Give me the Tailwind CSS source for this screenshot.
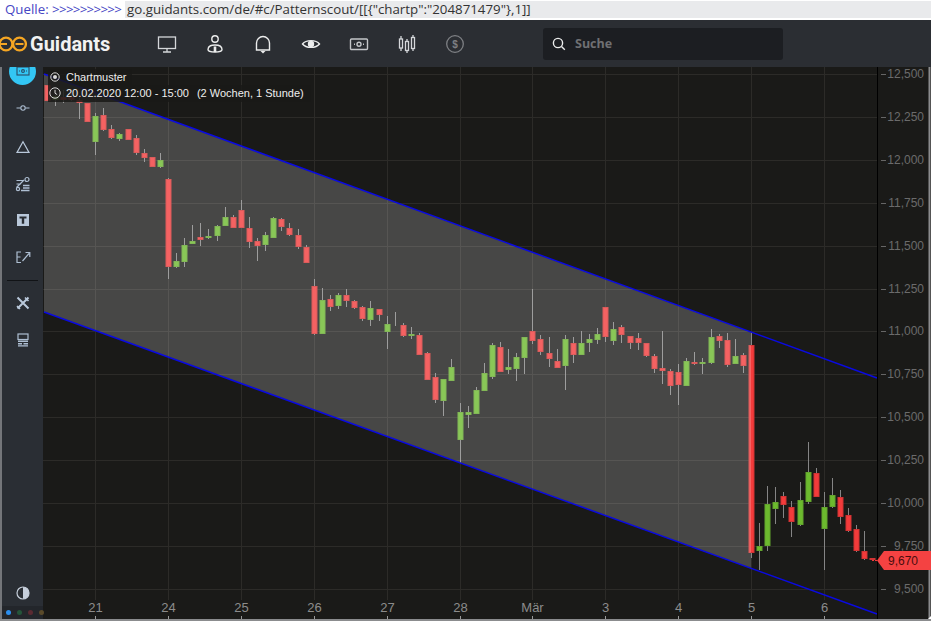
<!DOCTYPE html>
<html lang="en">
<head>
    <meta charset="UTF-8">
    <title>Guidants</title>
    <script src="https://cdn.jsdelivr.net/npm/@tailwindcss/browser@4"></script>
</head>
<body class="w-[931px] h-[621px] overflow-hidden bg-white flex flex-col font-['Liberation_Sans',sans-serif]">

    <!-- Source line -->
    <div class="h-[20px] flex items-start pt-px text-[13.3px] leading-[17px] font-['Open_Sans',sans-serif]">
        <span class="w-[125px] shrink-0 pl-[5px] text-[#4646c4] whitespace-nowrap">Quelle: <span class="tracking-[-0.7px]">&gt;&gt;&gt;&gt;&gt;&gt;&gt;&gt;&gt;&gt;</span></span>
        <span class="flex-1 h-[17px] pl-[2px] bg-[#e9eaec] text-[#333] whitespace-nowrap">go.guidants.com/de/#c/Patternscout/[[{"chartp":"204871479"},1]]</span>
    </div>

    <!-- Top navigation -->
    <div class="h-[47px] shrink-0 pt-px bg-[#2b2e33] flex items-center relative">
        <div class="w-[157px] shrink-0 flex items-center">
            <svg class="w-[27px] h-[20px] shrink-0" viewBox="0 0 27 20" fill="none" stroke="#f5a623" stroke-width="2.3">
                <circle cx="6" cy="10" r="6.4"/>
                <circle cx="19.5" cy="10" r="6.4"/>
                <path d="M0 10H7M15.5 10H23.5" stroke-width="2"/>
            </svg>
            <span class="ml-[3px] text-[20px] leading-none font-bold text-[#f2f2f2] font-['Roboto',sans-serif]">Guidants</span>
        </div>
        <div class="flex items-center gap-[28px]">
            <svg class="w-[20px] h-[20px]" viewBox="0 0 20 20" fill="none" stroke="#d5d7da" stroke-width="1.3"><rect x="1.5" y="3" width="17" height="11.5"/><path d="M10 14.5V18M6 18H14"/></svg>
            <svg class="w-[20px] h-[20px]" viewBox="0 0 20 20" fill="none" stroke="#eceded" stroke-width="1.4"><circle cx="10" cy="5" r="3.2"/><path d="M3 15.5C3 11.5 7 11 10 11S17 11.5 17 15.5C17 17.5 14 18 10 18S3 17.5 3 15.5Z"/><path d="M10 12.5V18" stroke-width="2.6"/></svg>
            <svg class="w-[20px] h-[20px]" viewBox="0 0 20 20" fill="none" stroke="#eceded" stroke-width="1.4"><path d="M3.5 16V9A6.5 6.5 0 0 1 16.5 9V16Z"/><path d="M7.5 17H12.5L10 19.5Z" fill="#eceded" stroke="none"/></svg>
            <svg class="w-[20px] h-[20px]" viewBox="0 0 20 20" fill="none" stroke="#eceded" stroke-width="1.4"><path d="M1.5 10C5 5.5 15 5.5 18.5 10C15 14.5 5 14.5 1.5 10Z"/><circle cx="10" cy="10" r="3.2" fill="#eceded" stroke="none"/></svg>
            <svg class="w-[20px] h-[20px]" viewBox="0 0 20 20" fill="none" stroke="#c4c6c9" stroke-width="1.4"><rect x="1.5" y="5" width="17" height="10.5" rx="1"/><circle cx="10" cy="10.2" r="2"/><path d="M5 10.2H6M14 10.2H15"/></svg>
            <svg class="w-[20px] h-[20px]" viewBox="0 0 20 20" fill="none" stroke="#d5d7da" stroke-width="1.3"><rect x="2.5" y="5" width="3" height="9"/><path d="M4 2V5M4 14V17"/><rect x="8.5" y="7.5" width="3" height="9"/><path d="M10 5V7.5M10 16.5V19"/><rect x="14.5" y="3.5" width="3" height="11"/><path d="M16 1V3.5M16 14.5V17"/></svg>
            <svg class="w-[20px] h-[20px]" viewBox="0 0 20 20" fill="none" stroke="#7e8084" stroke-width="1.3"><circle cx="10" cy="10" r="8.3"/><text x="10" y="13.5" text-anchor="middle" font-size="10" font-weight="700" fill="#7e8084" stroke="none" font-family="Liberation Sans">$</text></svg>
        </div>
        <div class="ml-[78px] w-[240px] h-[32px] rounded-[3px] bg-[#1c1e22] flex items-center pl-[9px]">
            <svg class="w-[14px] h-[14px]" viewBox="0 0 14 14" fill="none" stroke="#eceded" stroke-width="1.4"><circle cx="6" cy="6" r="4.6"/><path d="M9.5 9.5L12.8 12.8"/></svg>
            <span class="ml-[9px] text-[12.5px] font-bold text-[#6f7073] font-['Open_Sans',sans-serif]">Suche</span>
        </div>
    </div>

    <div class="flex-1 flex min-h-0 relative bg-[#1a1a18] border-b-2 border-[#8b8c8e]">
        <!-- Left toolbar -->
        <div class="w-[43px] shrink-0 bg-[#2a2e34] border-l-2 border-[#74767a] flex flex-col items-center relative overflow-hidden">
            <div class="absolute left-[7px] top-[-9.5px] w-[27px] h-[27px] rounded-full bg-[#33c6f4] flex items-center justify-center">
                <svg class="w-[14px] h-[10px]" viewBox="0 0 14 10" fill="none" stroke="#2a4c66" stroke-width="1.1"><rect x="1" y="1" width="12" height="8"/><circle cx="7" cy="5" r="1.4"/><path d="M3 5H4M10 5H11"/></svg>
            </div>
            <svg class="w-[16px] h-[16px] mt-[33px] shrink-0" viewBox="0 0 16 16" fill="none" stroke="#aebfd3" stroke-width="1.1"><path d="M1.5 8H5.5M10.5 8H14.5"/><circle cx="8" cy="8" r="2.2"/></svg>
            <svg class="w-[16px] h-[16px] mt-[23px] shrink-0" viewBox="0 0 16 16" fill="none" stroke="#b9c8da" stroke-width="1.2"><path d="M8 2.8L14 13.4H2Z"/></svg>
            <svg class="w-[16px] h-[16px] mt-[21px] shrink-0" viewBox="0 0 16 16" fill="none" stroke="#aebfd3" stroke-width="1.2"><path d="M1.5 4.5H9M1.5 8H6M1.5 11.5L9 4"/><circle cx="12" cy="3.5" r="2"/><circle cx="3" cy="13" r="1.6"/><path d="M8 9.5H14.5M8 12H14.5M6 14.4H14.5" stroke-width="1.5"/></svg>
            <svg class="w-[16px] h-[16px] mt-[20px] shrink-0" viewBox="0 0 16 16"><rect x="2" y="2" width="12" height="12" fill="#b9c8da"/><path d="M4.5 4.5H11.5V6.5H9.2V11.8H6.8V6.5H4.5Z" fill="#2a2e34"/></svg>
            <svg class="w-[16px] h-[16px] mt-[21px] shrink-0" viewBox="0 0 16 16" fill="none" stroke="#aebfd3" stroke-width="1.2"><path d="M6 3H2V13.5H6M2 8H5.5"/><path d="M7.5 12L14 4.5M10.5 3.5H14.8V8" /></svg>
            <div class="w-[31px] h-px mt-[15px] bg-[#111316] shrink-0"></div>
            <svg class="w-[16px] h-[16px] mt-[14px] shrink-0" viewBox="0 0 16 16" fill="none" stroke="#b9c8da" stroke-width="2"><path d="M2.5 2.5L13.5 13.5M13.5 2.5L2.5 13.5"/><path d="M10 2.5L13.5 6M2 11L5 14" stroke-width="1.6"/></svg>
            <svg class="w-[16px] h-[16px] mt-[21px] shrink-0" viewBox="0 0 16 16"><rect x="3" y="2" width="10" height="5.5" fill="none" stroke="#aebfd3" stroke-width="1.2"/><path d="M3 8.5H13V10H3ZM3 11H7V12.4H3ZM8.5 11H13V12.4H8.5ZM3 13.2H13V14.6H3Z" fill="#aebfd3"/></svg>
            <svg class="w-[14px] h-[14px] mt-auto mb-[19px] shrink-0" viewBox="0 0 14 14"><circle cx="7" cy="7" r="6" fill="#2a2e34" stroke="#c6cfdb" stroke-width="1.2"/><path d="M7 1A6 6 0 0 1 7 13Z" fill="#c6cfdb"/></svg>
            <div class="absolute left-0 bottom-0 w-[48px] h-[13px] bg-[#23262b]"></div>
        </div>

        <!-- Chart canvas, drawn in page coordinates -->
        <div class="flex-1 relative min-w-0">
            <svg id="chart" class="absolute inset-0 w-[888px] h-[552px]" viewBox="43 67 888 552" font-family="Liberation Sans"></svg>
            <div class="absolute left-[5px] top-[2px] h-[16px] pl-[2px] pr-[5px] flex items-center bg-[#1a1a18]/85 text-[11px] text-[#eeeeee]">
                <svg class="w-[10px] h-[10px] mr-[6px]" viewBox="0 0 10 10" fill="none" stroke="#d8d8d8"><circle cx="5" cy="5" r="4.2"/><circle cx="5" cy="5" r="2" fill="#d8d8d8" stroke="none"/></svg>
                Chartmuster
            </div>
            <div class="absolute left-[5px] top-[18px] h-[16.5px] pl-px pr-[7px] flex items-center bg-[#1a1a18]/85 text-[11px] text-[#eeeeee] whitespace-pre">
                <svg class="w-[12px] h-[12px] mr-[5px]" viewBox="0 0 12 12" fill="none" stroke="#d8d8d8"><circle cx="6" cy="6" r="5.2"/><path d="M6 2.8V6.2L8.2 7.6"/></svg>
                <span>20.02.2020 12:00 - 15:00</span><span class="ml-[8px]">(2 Wochen, 1 Stunde)</span>
            </div>
        </div>

        <!-- Theme dots -->
        <div class="absolute left-[6px] bottom-[4px] flex gap-[6px]">
            <span class="w-[5px] h-[5px] rounded-full bg-[#2b8ff0]"></span>
            <span class="w-[5px] h-[5px] rounded-full bg-[#24553a]"></span>
            <span class="w-[5px] h-[5px] rounded-full bg-[#5a2a32]"></span>
            <span class="w-[5px] h-[5px] rounded-full bg-[#5a4a2a]"></span>
        </div>
    </div>

    <script>
        const svg = document.getElementById('chart');
        const NS = 'http://www.w3.org/2000/svg';

        function add(tag, attrs, text) {
            const el = document.createElementNS(NS, tag);
            for (const k in attrs) el.setAttribute(k, attrs[k]);
            if (text) el.textContent = text;
            svg.appendChild(el);
        }

        // grid and axis labels
        const prices = ['12,500','12,250','12,000','11,750','11,500','11,250','11,000','10,750','10,500','10,250','10,000','9,750','9,500'];
        prices.forEach((p, i) => {
            const y = Math.round(74 + i * 42.9) + 0.5;
            add('path', { d: `M43 ${y}H877`, stroke: '#2c2b28' });
            add('path', { d: `M881 ${y}H886`, stroke: '#666' });
            add('text', { x: 924, y: y + 3, 'text-anchor': 'end', 'font-size': 12, fill: '#6b6b6b' }, p);
        });
        const days = [[95,'21'],[168,'24'],[241,'25'],[314,'26'],[387,'27'],[460,'28'],[532,'Mär'],[605,'3'],[678,'4'],[751,'5'],[824,'6']];
        days.forEach(([x, label]) => {
            add('path', { d: `M${x + 0.5} 67V600`, stroke: '#2c2b28' });
            add('path', { d: `M${x + 0.5} 616V619`, stroke: '#999' });
            add('text', { x: x + 0.5, y: 612, 'text-anchor': 'middle', 'font-size': 13, fill: '#8c8c8c' }, label);
        });

        // x, high, top of body, bottom of body, low, colour
        const candles = [
            [47,85,85,101,101,'r'],[55,90,96,100,106,'g'],[63,90,97,100,103,'r'],[71,90,97,100,101,'r'],[79,98,100,103,119,'r'],
            [87,103,103,122,122,'r'],[95,113,116,142,155,'g'],[103,108,115,130,131,'r'],[111,125,129,138,139,'r'],[119,133,134,139,141,'g'],
            [128,129,129,140,140,'r'],[136,135,138,153,155,'r'],[144,149,153,158,162,'r'],[152,157,157,167,167,'r'],[160,153,160,167,168,'g'],
            [168,178,179,267,279,'r'],[176,253,261,267,268,'g'],[184,238,245,262,267,'g'],[192,225,241,244,244,'g'],[200,223,237,240,246,'r'],
            [208,229,236,238,239,'g'],[217,225,226,236,241,'g'],[225,207,217,226,226,'g'],[233,215,217,228,228,'r'],[241,200,210,228,228,'r'],
            [249,217,228,242,248,'r'],[257,238,241,246,261,'r'],[265,232,235,245,251,'g'],[273,217,218,238,238,'g'],[281,218,219,227,231,'r'],
            [289,223,228,235,236,'r'],[298,229,235,247,249,'r'],[306,245,247,263,263,'r'],
            [314,279,286,334,335,'r'],[322,288,300,334,334,'g'],[330,295,299,307,311,'r'],[338,293,295,306,309,'g'],[346,289,295,301,307,'r'],
            [354,300,301,308,309,'r'],[362,306,307,319,321,'r'],[370,301,308,320,326,'g'],[379,309,309,315,321,'r'],[387,316,324,332,349,'g'],
            [395,312,325,326,326,'r'],[403,323,325,336,337,'r'],[411,327,334,336,339,'g'],[419,333,335,355,355,'r'],[427,352,353,380,380,'r'],
            [435,373,377,400,403,'r'],[443,379,379,401,416,'g'],[451,359,367,381,381,'g'],[460,403,412,440,463,'g'],[468,406,412,415,428,'g'],
            [476,387,390,414,414,'g'],[484,363,373,391,391,'g'],[492,343,345,377,379,'g'],[500,342,347,372,372,'r'],[508,349,367,370,374,'g'],
            [516,353,357,369,381,'g'],[524,337,337,358,374,'g'],[532,289,331,341,344,'r'],[540,335,339,352,355,'r'],[549,337,353,359,367,'r'],
            [557,349,361,368,368,'r'],[565,335,339,366,390,'g'],[573,337,343,355,363,'r'],[581,331,343,355,355,'g'],[589,334,339,343,352,'g'],
            [597,328,334,340,344,'g'],[605,307,307,337,342,'r'],[613,322,329,341,345,'g'],[621,325,327,335,343,'r'],[630,336,336,343,349,'r'],
            [638,333,338,343,350,'r'],[646,343,343,356,357,'r'],[654,354,356,369,373,'r'],[662,331,368,371,384,'r'],[670,369,371,386,395,'r'],
            [678,364,372,385,405,'r'],[686,358,361,386,386,'g'],[694,352,362,364,365,'r'],[702,358,362,364,374,'g'],[711,329,337,363,364,'g'],
            [719,334,336,341,348,'r'],[727,333,340,365,367,'r'],[735,339,356,364,364,'g'],[743,353,355,366,373,'r'],[751,332,345,553,558,'r'],
            [759,523,546,551,570,'g'],[767,486,504,546,551,'g'],[775,487,502,509,524,'g'],[783,492,496,505,518,'r'],[791,501,507,522,537,'r'],
            [800,482,500,525,526,'g'],[808,442,472,502,504,'g'],[816,468,473,497,497,'r'],[824,492,507,529,570,'g'],[832,478,495,507,508,'g'],
            [840,490,497,517,524,'r'],[848,508,515,531,532,'r'],[856,525,529,551,552,'r'],[864,531,551,559,560,'r'],[872,558,558,560,561,'r']
        ];
        candles.forEach(([x, hi, top, bot, lo, c]) => {
            add('path', { d: `M${x + 0.5} ${hi}V${lo}`, stroke: '#858585' });
            const fill = c === 'r' ? '#f23b3b' : '#6cba2e';
            const edge = c === 'r' ? '#d23333' : '#63a52c';
            add('rect', { x: x - 2, y: top + 0.5, width: 5, height: bot - top - 1, fill, stroke: edge });
        });

        // pattern channel
        add('polygon', { points: '44,74 751,332 751,568.5 44,312', fill: '#ffffff', 'fill-opacity': 0.2 });
        add('path', { d: 'M44 74L877 378M44 312L877 614', stroke: '#0a0ae0', 'stroke-width': 1.5, fill: 'none' });

        // right axis and last price
        add('path', { d: 'M877.5 67V619', stroke: '#000' });
        add('path', { d: 'M929.5 67V619', stroke: '#8b8c8e', 'stroke-width': 2 });
        add('path', { d: 'M872 560.5H877', stroke: '#f23b3b', 'stroke-dasharray': '2 1' });
        add('polygon', { points: '877,560.5 884,551 931,551 931,570 884,570', fill: '#f44242' });
        add('text', { x: 888, y: 565, 'font-size': 12, fill: '#4a0d0d' }, '9,670');
        add('polygon', { points: '931,616 931,619 928,619', fill: '#fff' });
    </script>
</body>
</html>
